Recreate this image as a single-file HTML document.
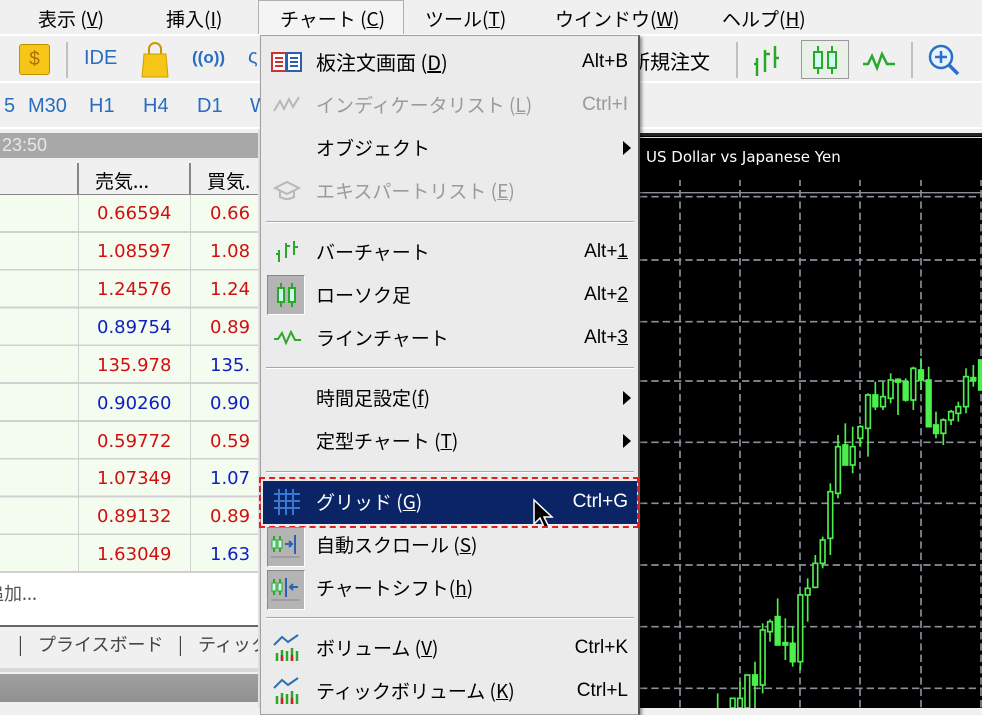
<!DOCTYPE html>
<html><head><meta charset="utf-8"><style>
*{margin:0;padding:0;box-sizing:border-box}
body{width:982px;height:708px;overflow:hidden;position:relative;background:#f0f0f0;font-family:"Liberation Sans","Noto Sans CJK JP",sans-serif;font-size:19px;color:#000}
.a{position:absolute;white-space:nowrap}
.jp{font-family:"Noto Sans CJK JP","Liberation Sans",sans-serif}
u{text-decoration:underline}
.num{position:absolute;font-family:"DejaVu Sans","Liberation Sans",sans-serif;font-size:18px}
.r{color:#d01010}.b{color:#1020c0}
.mi{position:absolute;left:316px;font-family:"Noto Sans CJK JP",sans-serif;font-size:19px;line-height:24px}
.sc{position:absolute;right:354px;font-size:19px;line-height:24px}
.dis{color:#9a9a9a}
.sep{position:absolute;left:266px;width:368px;height:2px;border-top:1px solid #a8a8a8;border-bottom:1px solid #fff}
.arr{position:absolute;left:623px;width:0;height:0;border-top:7px solid transparent;border-bottom:7px solid transparent;border-left:8px solid #000}
.ibox{position:absolute;left:267px;width:38px;height:40px;background:#b4b4b4;border:1px solid #888;border-right-color:#fff;border-bottom-color:#fff}
.tf{position:absolute;top:95px;color:#2a6cc0;font-size:20px}
</style></head><body>
<!-- menu bar -->
<div class="a jp" style="left:0;top:0;width:982px;height:36px;background:#f0f0f0;border-bottom:2px solid #fff"></div>
<div class="a" style="left:258px;top:0;width:146px;height:34px;border:1px solid #b0b0b0;border-bottom:none;background:#f4f4f4"></div>
<div class="a jp" style="left:38px;top:5px">表示 (<u>V</u>)</div>
<div class="a jp" style="left:166px;top:5px">挿入(<u>I</u>)</div>
<div class="a jp" style="left:280px;top:5px">チャート (<u>C</u>)</div>
<div class="a jp" style="left:425px;top:5px">ツール(<u>T</u>)</div>
<div class="a jp" style="left:555px;top:5px">ウインドウ(<u>W</u>)</div>
<div class="a jp" style="left:722px;top:5px">ヘルプ(<u>H</u>)</div>
<!-- toolbar 1 -->
<div class="a" style="left:0;top:38px;width:982px;height:45px;background:#f0f0f0;border-bottom:2px solid #fff"></div>
<div class="a" style="left:19px;top:44px;width:31px;height:31px;background:#f5c518;border:1px solid #c09000;border-radius:3px;color:#b07000;text-align:center;font-size:19px;line-height:29px">$</div>
<div class="a" style="left:66px;top:42px;width:2px;height:36px;background:#c0c0c0"></div>
<div class="a" style="left:84px;top:47px;color:#2a6cc0;font-size:20px">IDE</div>
<svg class="a" style="left:140px;top:42px" width="30" height="36"><path d="M9 16 V7 a6 6 0 0 1 12 0 V16" fill="none" stroke="#c89800" stroke-width="2"/><path d="M4 12 H26 L28 35 H2 Z" fill="#f5c518" stroke="#d0a000"/></svg>
<div class="a" style="left:192px;top:48px;color:#2a6cc0;font-size:17px;font-weight:bold">((o))</div>
<div class="a" style="left:248px;top:46px;color:#2a6cc0;font-size:20px">ς</div>
<div class="a jp" style="left:630px;top:46px;font-size:20px">新規注文</div>
<div class="a" style="left:736px;top:42px;width:2px;height:36px;background:#c0c0c0"></div>
<svg class="a" style="left:752px;top:44px" width="30" height="34"><path d="M5 32V14M2 20H5M13 28V6M13 10H18M23 24V2M23 14H27" stroke="#2aa82a" stroke-width="2.5" fill="none"/></svg>
<div class="a" style="left:801px;top:40px;width:48px;height:39px;background:#e8f0e8;border:1px solid #999"></div>
<svg class="a" style="left:810px;top:44px" width="30" height="32"><path d="M8 2V30M22 2V30" stroke="#2aa82a" stroke-width="2"/><rect x="4" y="8" width="8" height="16" fill="#cfe" stroke="#2aa82a" stroke-width="2"/><rect x="18" y="8" width="8" height="16" fill="#cfe" stroke="#2aa82a" stroke-width="2"/></svg>
<svg class="a" style="left:862px;top:50px" width="34" height="22"><path d="M1 14H6L10 6L15 18L20 4L25 14H33" stroke="#2aa82a" stroke-width="2.5" fill="none"/></svg>
<div class="a" style="left:911px;top:42px;width:2px;height:36px;background:#c0c0c0"></div>
<svg class="a" style="left:926px;top:42px" width="36" height="38"><circle cx="15" cy="15" r="11" fill="#e8f2ff" stroke="#2a70c8" stroke-width="2.5"/><path d="M15 9V21M9 15H21" stroke="#2a70c8" stroke-width="2.5"/><path d="M23 23L32 32" stroke="#2a70c8" stroke-width="3.5"/></svg>
<!-- toolbar 2 -->
<div class="a" style="left:0;top:85px;width:982px;height:44px;background:#f0f0f0;border-bottom:2px solid #fff"></div>
<div class="tf" style="left:4px">5</div><div class="tf" style="left:28px">M30</div><div class="tf" style="left:89px">H1</div><div class="tf" style="left:143px">H4</div><div class="tf" style="left:197px">D1</div><div class="tf" style="left:250px">W</div>
<!-- left panel -->
<div class="a" style="left:0;top:133px;width:258px;height:25px;background:#a8a8a8;color:#e8e8e8;font-size:18px;line-height:25px;padding-left:2px">23:50</div>
<div class="a" style="left:0;top:158px;width:258px;height:4px;background:#f0f0f0"></div>
<div class="a" style="left:0;top:163px;width:258px;height:32px;background:#f0f0f0;border-bottom:1px solid #888"></div>
<div class="a" style="left:77px;top:163px;width:2px;height:32px;background:#888"></div>
<div class="a" style="left:189px;top:163px;width:2px;height:32px;background:#888"></div>
<div class="a jp" style="left:95px;top:167px;font-size:19px">売気...</div>
<div class="a jp" style="left:207px;top:167px;font-size:19px">買気.</div>
<div class="a" style="left:0;top:195px;width:258px;height:378px;background:#f4fcf0;background-image:repeating-linear-gradient(to bottom,transparent 0,transparent 36px,#d0d0d0 36px,#d0d0d0 37.8px)"></div>
<div class="a" style="left:78px;top:195px;width:1px;height:378px;background:#d0d0d0"></div>
<div class="a" style="left:190px;top:195px;width:1px;height:378px;background:#d0d0d0"></div>
<div class="num r" style="left:97px;top:203px">0.66594</div><div class="num r" style="left:210px;top:203px">0.66</div>
<div class="num r" style="left:97px;top:241px">1.08597</div><div class="num r" style="left:210px;top:241px">1.08</div>
<div class="num r" style="left:97px;top:279px">1.24576</div><div class="num r" style="left:210px;top:279px">1.24</div>
<div class="num b" style="left:97px;top:317px">0.89754</div><div class="num r" style="left:210px;top:317px">0.89</div>
<div class="num r" style="left:97px;top:355px">135.978</div><div class="num b" style="left:210px;top:355px">135.</div>
<div class="num b" style="left:97px;top:393px">0.90260</div><div class="num b" style="left:210px;top:393px">0.90</div>
<div class="num r" style="left:97px;top:431px">0.59772</div><div class="num r" style="left:210px;top:431px">0.59</div>
<div class="num r" style="left:97px;top:468px">1.07349</div><div class="num b" style="left:210px;top:468px">1.07</div>
<div class="num r" style="left:97px;top:506px">0.89132</div><div class="num r" style="left:210px;top:506px">0.89</div>
<div class="num r" style="left:97px;top:544px">1.63049</div><div class="num b" style="left:210px;top:544px">1.63</div>
<div class="a" style="left:0;top:573px;width:258px;height:52px;background:#fff"></div>
<div class="a jp" style="left:-14px;top:580px;color:#555;font-size:18px">追加...</div>
<div class="a" style="left:0;top:625px;width:258px;height:2px;background:#666"></div>
<div class="a jp" style="left:18px;top:631px;color:#444;font-size:18px">|</div>
<div class="a jp" style="left:38px;top:631px;color:#444;font-size:18px">プライスボード</div>
<div class="a jp" style="left:178px;top:631px;color:#444;font-size:18px">|</div>
<div class="a jp" style="left:198px;top:631px;color:#444;font-size:18px">ティック</div>
<div class="a" style="left:0;top:668px;width:262px;height:4px;background:#d8d8d8"></div>
<div class="a" style="left:0;top:674px;width:262px;height:28px;background:linear-gradient(#a0a0a0,#909090)"></div>
<div class="a" style="left:258px;top:129px;width:4px;height:579px;background:#e0e0e0"></div>
<!-- chart -->
<div class="a" style="left:640px;top:129px;width:342px;height:4px;background:#f0f0f0"></div>
<div class="a" style="left:640px;top:133px;width:342px;height:575px;background:#000;border-top:3px solid #222"></div>
<div class="a" style="left:640px;top:137px;width:342px;height:1px;background:#ddd"></div>
<svg class="a" style="left:640px;top:180px" width="342" height="528" viewBox="0 0 1026 1584">
<g stroke="#8a8f99" stroke-width="5" stroke-dasharray="22 12" fill="none">
<path d="M120 -140V1584M300 -140V1584M480 -140V1584M660 -140V1584M843 -140V1584M1023 -140V1584"/>
<path d="M0 50H1026M0 240H1026M0 425H1026M0 603H1026M0 787H1026M0 970H1026M0 1155H1026M0 1340H1026M0 1525H1026"/>
</g>
<path d="M0 38H1026" stroke="#8a8f99" stroke-width="4"/>
<g stroke="#4cf04c" stroke-width="5" fill="#000">
<line x1="233" y1="1540" x2="233" y2="1584"/><rect x="271" y="1555" width="14" height="29"/>
<line x1="300" y1="1505" x2="300" y2="1584"/><rect x="293" y="1555" width="14" height="29"/>
<rect x="315" y="1485" width="14" height="99"/>
<line x1="345" y1="1445" x2="345" y2="1584"/><rect x="338" y="1485" width="14" height="30" fill="#4cf04c"/>
<line x1="368" y1="1330" x2="368" y2="1540"/><rect x="361" y="1350" width="14" height="165"/>
<line x1="390" y1="1318" x2="390" y2="1385"/><rect x="383" y="1325" width="14" height="30"/>
<line x1="413" y1="1255" x2="413" y2="1395"/><rect x="406" y="1310" width="14" height="85" fill="#4cf04c"/>
<line x1="436" y1="1315" x2="436" y2="1440"/><rect x="429" y="1388" width="14" height="7" fill="#4cf04c"/>
<line x1="458" y1="1340" x2="458" y2="1460"/><rect x="451" y="1390" width="14" height="55" fill="#4cf04c"/>
<line x1="481" y1="1240" x2="481" y2="1470"/><rect x="474" y="1245" width="14" height="200"/>
<line x1="503" y1="1195" x2="503" y2="1325"/><rect x="496" y="1225" width="14" height="20"/>
<line x1="526" y1="1125" x2="526" y2="1225"/><rect x="519" y="1150" width="14" height="72"/>
<line x1="548" y1="1070" x2="548" y2="1165"/><rect x="541" y="1080" width="14" height="70"/>
<line x1="571" y1="910" x2="571" y2="1125"/><rect x="564" y="935" width="14" height="140"/>
<line x1="594" y1="765" x2="594" y2="955"/><rect x="587" y="800" width="14" height="140"/>
<line x1="616" y1="730" x2="616" y2="855"/><rect x="609" y="795" width="14" height="60" fill="#4cf04c"/>
<line x1="638" y1="740" x2="638" y2="880"/><rect x="631" y="800" width="14" height="55"/>
<line x1="661" y1="735" x2="661" y2="800"/><rect x="654" y="740" width="14" height="35"/>
<line x1="684" y1="640" x2="684" y2="830"/><rect x="677" y="645" width="14" height="100"/>
<line x1="706" y1="605" x2="706" y2="690"/><rect x="699" y="645" width="14" height="35" fill="#4cf04c"/>
<line x1="729" y1="605" x2="729" y2="690"/><rect x="722" y="650" width="14" height="30"/>
<line x1="752" y1="580" x2="752" y2="670"/><rect x="745" y="600" width="14" height="55"/>
<line x1="774" y1="595" x2="774" y2="705"/><rect x="767" y="598" width="14" height="8" fill="#4cf04c"/>
<line x1="797" y1="595" x2="797" y2="665"/><rect x="790" y="605" width="14" height="55" fill="#4cf04c"/>
<line x1="820" y1="560" x2="820" y2="690"/><rect x="813" y="565" width="14" height="95"/>
<line x1="843" y1="535" x2="843" y2="630"/><rect x="836" y="570" width="14" height="30" fill="#4cf04c"/>
<line x1="866" y1="560" x2="866" y2="740"/><rect x="859" y="600" width="14" height="140" fill="#4cf04c"/>
<line x1="888" y1="695" x2="888" y2="775"/><rect x="881" y="735" width="14" height="25" fill="#4cf04c"/>
<line x1="910" y1="715" x2="910" y2="795"/><rect x="903" y="720" width="14" height="40"/>
<line x1="933" y1="690" x2="933" y2="735"/><rect x="926" y="695" width="14" height="25"/>
<line x1="955" y1="665" x2="955" y2="725"/><rect x="948" y="680" width="14" height="20"/>
<line x1="978" y1="565" x2="978" y2="700"/><rect x="971" y="590" width="14" height="90"/>
<line x1="1000" y1="555" x2="1000" y2="620"/><rect x="993" y="593" width="14" height="8" fill="#4cf04c"/>
<rect x="1016" y="540" width="14" height="90" fill="#4cf04c"/>
</g>
</svg>
<div class="a" style="left:646px;top:148px;color:#fff;font-size:15px;font-family:'DejaVu Sans',sans-serif">US Dollar vs Japanese Yen</div>
<!-- dropdown menu -->
<div class="a" style="left:260px;top:35px;width:380px;height:680px;background:#ebebeb;border:1px solid #a0a0a0;border-right:2px solid #555;box-shadow:2px 2px 3px rgba(0,0,0,.4)"></div>
<svg class="a" style="left:271px;top:52px" width="32" height="20"><rect x="1" y="1" width="14" height="18" fill="#fff" stroke="#d03030" stroke-width="2"/><rect x="16" y="1" width="14" height="18" fill="#fff" stroke="#2a60b0" stroke-width="2"/><path d="M4 6H12M4 10H12M4 14H12" stroke="#d03030" stroke-width="2"/><path d="M19 6H27M19 10H27M19 14H27" stroke="#2a60b0" stroke-width="2"/></svg>
<div class="mi" style="top:50px;font-size:20px">板注文画面 (<u>D</u>)</div><div class="sc" style="top:50px">Alt+B</div>
<svg class="a" style="left:273px;top:95px" width="28" height="20"><path d="M1 16L7 6L11 14L16 4L20 12L26 2" stroke="#b8b8b8" stroke-width="2" fill="none"/></svg>
<div class="mi dis" style="top:93px">インディケータリスト (<u>L</u>)</div><div class="sc dis" style="top:93px">Ctrl+I</div>
<div class="mi" style="top:136px">オブジェクト</div><div class="arr" style="top:141px"></div>
<svg class="a" style="left:273px;top:180px" width="28" height="22"><path d="M2 8L14 2L26 8L14 14Z M7 11V17Q14 21 21 17V11" stroke="#b8b8b8" stroke-width="2" fill="none"/></svg>
<div class="mi dis" style="top:179px">エキスパートリスト (<u>E</u>)</div>
<div class="sep" style="top:221px"></div>
<svg class="a" style="left:275px;top:240px" width="26" height="24"><path d="M4 22V10M1 14H4M11 18V3M11 6H15M19 15V1M19 7H23" stroke="#2aa82a" stroke-width="2" fill="none"/></svg>
<div class="mi" style="top:240px">バーチャート</div><div class="sc" style="top:240px">Alt+<u>1</u></div>
<div class="ibox" style="top:275px"></div>
<svg class="a" style="left:276px;top:282px" width="22" height="26"><path d="M5 1V25M16 1V25" stroke="#2aa82a" stroke-width="2"/><rect x="2" y="6" width="6" height="14" fill="#cfe" stroke="#2aa82a" stroke-width="2"/><rect x="13" y="6" width="6" height="14" fill="#cfe" stroke="#2aa82a" stroke-width="2"/></svg>
<div class="mi" style="top:283px">ローソク足</div><div class="sc" style="top:283px">Alt+<u>2</u></div>
<svg class="a" style="left:273px;top:330px" width="30" height="16"><path d="M1 9H5L9 3L13 13L18 2L22 10H28" stroke="#2aa82a" stroke-width="2" fill="none"/></svg>
<div class="mi" style="top:326px">ラインチャート</div><div class="sc" style="top:326px">Alt+<u>3</u></div>
<div class="sep" style="top:367px"></div>
<div class="mi" style="top:386px">時間足設定(<u>f</u>)</div><div class="arr" style="top:391px"></div>
<div class="mi" style="top:429px">定型チャート (<u>T</u>)</div><div class="arr" style="top:434px"></div>
<div class="sep" style="top:471px"></div>
<div class="a" style="left:263px;top:481px;width:374px;height:43px;background:#0a2466"></div>
<svg class="a" style="left:273px;top:488px" width="28" height="28"><path d="M1 6H27M1 13H27M1 20H27M6 1V27M13 1V27M20 1V27" stroke="#3a78d0" stroke-width="2"/></svg>
<div class="mi" style="top:490px;color:#fff">グリッド (<u>G</u>)</div><div class="sc" style="top:490px;color:#fff">Ctrl+G</div>
<svg class="a" style="left:532px;top:498px" width="24" height="34"><path d="M2 2V26L8 20L13 31L17 29L12 19H20Z" fill="#000" stroke="#fff" stroke-width="1.5"/></svg>
<div class="a" style="left:259px;top:477px;width:380px;height:51px;border:2px dashed #e02020"></div>
<div class="ibox" style="top:527px"></div>
<svg class="a" style="left:270px;top:532px" width="32" height="28"><path d="M4 4V20M10 4V20" stroke="#2aa82a" stroke-width="2"/><rect x="2" y="8" width="4" height="8" fill="#cfe" stroke="#2aa82a"/><rect x="8" y="8" width="4" height="8" fill="#cfe" stroke="#2aa82a"/><path d="M15 12H22M19 9L22 12L19 15M25 3V22" stroke="#2a60b0" stroke-width="2" fill="none"/><path d="M1 25H30" stroke="#888"/></svg>
<div class="mi" style="top:533px">自動スクロール (<u>S</u>)</div>
<div class="ibox" style="top:570px"></div>
<svg class="a" style="left:270px;top:575px" width="32" height="28"><path d="M4 4V20M10 4V20" stroke="#2aa82a" stroke-width="2"/><rect x="2" y="8" width="4" height="8" fill="#cfe" stroke="#2aa82a"/><rect x="8" y="8" width="4" height="8" fill="#cfe" stroke="#2aa82a"/><path d="M16 3V22M28 12H20M23 9L20 12L23 15" stroke="#2a60b0" stroke-width="2" fill="none"/><path d="M1 25H30" stroke="#888"/></svg>
<div class="mi" style="top:576px">チャートシフト(<u>h</u>)</div>
<div class="sep" style="top:617px"></div>
<svg class="a" style="left:272px;top:633px" width="30" height="30"><path d="M2 12L10 4L16 9L26 2" stroke="#2a70b0" stroke-width="2" fill="none"/><path d="M5 28V20M10 28V17M15 28V18M20 28V15M25 28V18" stroke="#2aa82a" stroke-width="2.5"/><path d="M10 28V22M20 28V22" stroke="#d02020" stroke-width="2.5"/></svg>
<div class="mi" style="top:636px">ボリューム (<u>V</u>)</div><div class="sc" style="top:636px">Ctrl+K</div>
<svg class="a" style="left:272px;top:676px" width="30" height="30"><path d="M2 12L10 4L16 9L26 2" stroke="#2a70b0" stroke-width="2" fill="none"/><path d="M5 28V20M10 28V17M15 28V18M20 28V15M25 28V18" stroke="#2aa82a" stroke-width="2.5"/><path d="M10 28V22M20 28V22" stroke="#d02020" stroke-width="2.5"/></svg>
<div class="mi" style="top:679px">ティックボリューム (<u>K</u>)</div><div class="sc" style="top:679px">Ctrl+L</div>
</body></html>
